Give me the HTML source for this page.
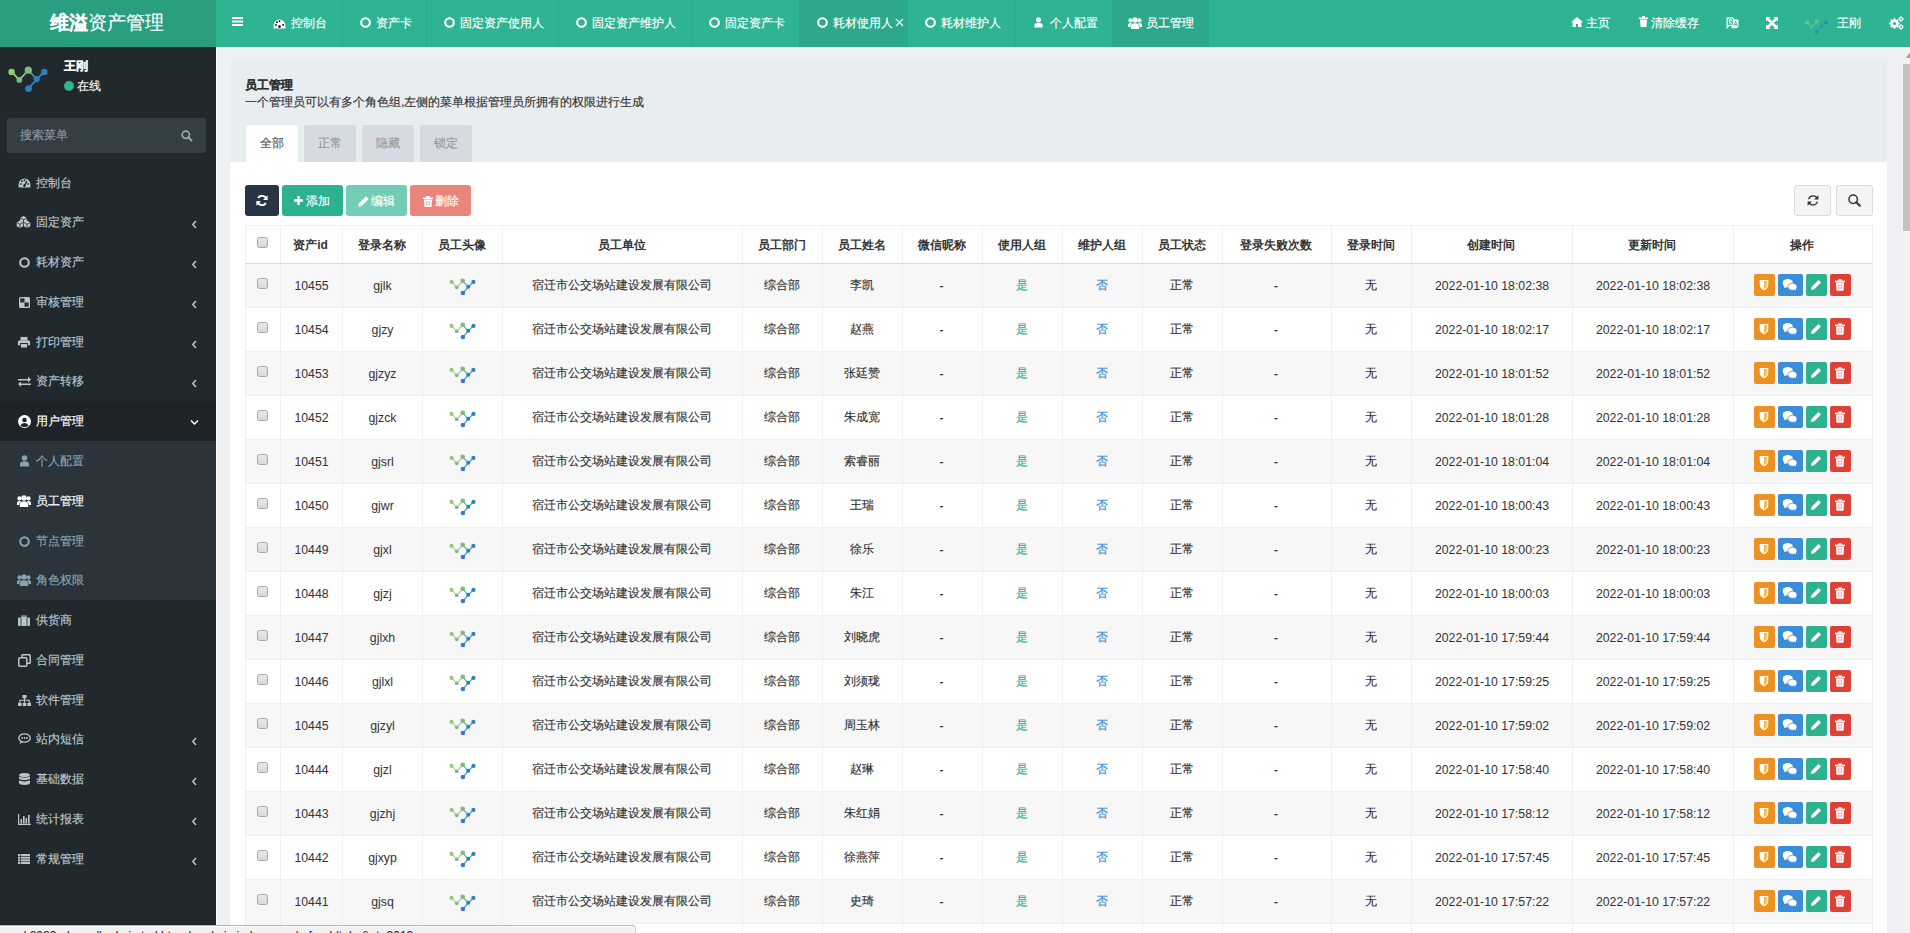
<!DOCTYPE html><html><head><meta charset="utf-8"><style>
*{box-sizing:border-box;margin:0;padding:0}
html,body{width:1910px;height:933px;overflow:hidden;background:#edf1f4;font-family:"Liberation Sans",sans-serif;font-size:12px;color:#333}
body{-webkit-text-stroke:0.15px currentColor}
th,.bold,.n{-webkit-text-stroke:0}
.abs{position:absolute}
#hdr{position:absolute;left:0;top:0;width:1910px;height:47px;background:#2fb493}
#logo{position:absolute;left:-1.5px;top:0;width:216px;height:47px;background:#299e80;color:#fff;font-size:19px;text-align:center;line-height:45px}
#logobg{position:absolute;left:0;top:0;width:216px;height:47px;background:#299e80}
.t{position:absolute;white-space:nowrap;line-height:1}
.sep{position:absolute;top:0;width:1px;height:47px;background:#2caa8a}
#side{position:absolute;left:0;top:47px;width:216px;height:886px;background:#22292d}
.mi{position:absolute;left:0;width:216px;height:40px;color:#b8c7ce;font-size:12px}
.mi .tx{position:absolute;left:36px;top:0;line-height:40px}
.mi .ico{position:absolute;left:17px;top:0;height:40px;display:flex;align-items:center;width:14px;justify-content:center}
.mi .chev{position:absolute;left:191px;top:15px}
#content{position:absolute;left:216px;top:47px;width:1694px;height:886px;background:#edf1f4}
#panel{position:absolute;left:230px;top:61px;width:1657px;height:900px;background:#fff}
#ph{position:absolute;left:0;top:0;width:1657px;height:101px;background:#e8edf0}
.ntab{position:absolute;top:64px;height:37px;background:#d5dbe1;color:#999;border-radius:3px 3px 0 0;text-align:center;line-height:36px;font-size:12px}
.btn{position:absolute;top:124px;height:31px;border-radius:3px;color:#fff;font-size:12px;line-height:31px;text-align:center}
table{position:absolute;left:245px;top:225px;border-collapse:collapse;table-layout:fixed}
td,th{border:1px solid #f0f0f0;text-align:center;white-space:nowrap;overflow:hidden;font-size:12px;font-weight:normal;color:#333;padding:0 2px 0 0}
th{height:38px;font-weight:bold;border-bottom:1px solid #d9d9d9;color:#333;padding-top:1px}
td{height:44px}
tr.odd td{background:#f7f7f7}
.n{font-size:12.3px;position:relative;left:1px}

.cb{display:inline-block;width:11px;height:11px;border:1px solid #a8a8a8;border-radius:2.5px;background:linear-gradient(#e8e8e8,#d8d8d8);vertical-align:middle;position:relative;top:-3px;left:0}
.ab{display:inline-block;height:22px;border-radius:2px;vertical-align:middle;margin-right:3px;position:relative;top:-1px;left:0}
.ab svg{position:absolute;left:50%;top:50%;transform:translate(-50%,-50%)}
</style></head><body>
<div id="hdr">
<div id="logobg"></div><div id="logo" style="background:none"><span style="font-weight:bold">维溢</span>资产管理</div>
<svg class="abs" style="left:232px;top:17px" width="11" height="9" viewBox="0 0 11 9"><rect y="0" width="11" height="2" fill="#fff"/><rect y="3.5" width="11" height="2" fill="#fff"/><rect y="7" width="11" height="2" fill="#fff"/></svg>
<div class="abs" style="left:799px;top:0;width:109px;height:47px;background:#2ca98a"></div>
<div class="abs" style="left:1112px;top:0;width:97px;height:47px;background:#2ca98a"></div>
<div class="sep" style="left:342px"></div>
<div class="sep" style="left:426px"></div>
<div class="sep" style="left:558px"></div>
<div class="sep" style="left:691px"></div>
<div class="sep" style="left:1015px"></div>
<div class="abs" style="left:273px;top:18px"><svg width="13" height="10" viewBox="0 0 14 11"><path d="M7 0.5A6.5 6.5 0 0 0 0.5 7v2.5a1 1 0 0 0 1 1h11a1 1 0 0 0 1-1V7A6.5 6.5 0 0 0 7 0.5z" fill="#fff"/><circle cx="3" cy="6.5" r="1" fill="{bg}"/><circle cx="4.2" cy="3.5" r="1" fill="{bg}"/><circle cx="7" cy="2.5" r="1" fill="{bg}"/><circle cx="11" cy="6.5" r="1" fill="{bg}"/><path d="M7 8.5L9.5 3.5" stroke="{bg}" stroke-width="1.6"/><circle cx="7" cy="8.3" r="1.5" fill="{bg}"/></svg></div>
<div class="t" style="left:291px;top:17px;color:#fff;font-size:12px">控制台</div>
<div class="abs" style="left:360px;top:17px"><svg width="11" height="11" viewBox="0 0 10 10"><circle cx="5" cy="5" r="3.9" fill="none" stroke="#fff" stroke-width="1.9"/></svg></div>
<div class="t" style="left:376px;top:17px;color:#fff;font-size:12px">资产卡</div>
<div class="abs" style="left:444px;top:17px"><svg width="11" height="11" viewBox="0 0 10 10"><circle cx="5" cy="5" r="3.9" fill="none" stroke="#fff" stroke-width="1.9"/></svg></div>
<div class="t" style="left:460px;top:17px;color:#fff;font-size:12px">固定资产使用人</div>
<div class="abs" style="left:576px;top:17px"><svg width="11" height="11" viewBox="0 0 10 10"><circle cx="5" cy="5" r="3.9" fill="none" stroke="#fff" stroke-width="1.9"/></svg></div>
<div class="t" style="left:592px;top:17px;color:#fff;font-size:12px">固定资产维护人</div>
<div class="abs" style="left:709px;top:17px"><svg width="11" height="11" viewBox="0 0 10 10"><circle cx="5" cy="5" r="3.9" fill="none" stroke="#fff" stroke-width="1.9"/></svg></div>
<div class="t" style="left:725px;top:17px;color:#fff;font-size:12px">固定资产卡</div>
<div class="abs" style="left:817px;top:17px"><svg width="11" height="11" viewBox="0 0 10 10"><circle cx="5" cy="5" r="3.9" fill="none" stroke="#fff" stroke-width="1.9"/></svg></div>
<div class="t" style="left:833px;top:17px;color:#fff;font-size:12px">耗材使用人</div>
<div class="abs" style="left:925px;top:17px"><svg width="11" height="11" viewBox="0 0 10 10"><circle cx="5" cy="5" r="3.9" fill="none" stroke="#fff" stroke-width="1.9"/></svg></div>
<div class="t" style="left:941px;top:17px;color:#fff;font-size:12px">耗材维护人</div>
<svg class="abs" style="left:895px;top:18px" width="9" height="9" viewBox="0 0 9 9"><path d="M1 1L8 8M8 1L1 8" stroke="#fff" stroke-width="1.1"/></svg>
<div class="abs" style="left:1034px;top:17px"><svg width="9" height="11" viewBox="0 0 9 12"><circle cx="4.5" cy="3" r="2.8" fill="#fff"/><path d="M0 11.5V9.5C0 7.3 1.5 6.3 4.5 6.3S9 7.3 9 9.5V11.5z" fill="#fff"/></svg></div>
<div class="t" style="left:1050px;top:17px;color:#fff;font-size:12px">个人配置</div>
<div class="abs" style="left:1127.5px;top:17px"><svg width="14" height="12" viewBox="0 0 14 12"><g fill="#fff"><circle cx="7" cy="3" r="2.7"/><circle cx="2.5" cy="3.4" r="2.1"/><circle cx="11.5" cy="3.4" r="2.1"/><path d="M2.8 12V9.3C2.8 7.2 4.5 6.2 7 6.2s4.2 1 4.2 3.1V12z"/><path d="M0 10V8.2C0 6.6 1 5.9 2.5 5.9c.8 0 1.3.2 1.7.5C3 7.1 2.3 8 2.3 10z"/><path d="M14 10V8.2c0-1.6-1-2.3-2.5-2.3-.8 0-1.3.2-1.7.5 1.2.7 1.9 1.6 1.9 3.6z"/></g></svg></div>
<div class="t" style="left:1146px;top:17px;color:#fff;font-size:12px">员工管理</div>
<svg class="abs" style="left:1571px;top:17px" width="12" height="10" viewBox="0 0 12 10"><path d="M6 0L0 5.2h1.6V10h3.3V7h2.2v3h3.3V5.2H12z" fill="#fff"/></svg>
<div class="t" style="left:1586px;top:17px;color:#fff;font-size:12px">主页</div>
<svg class="abs" style="left:1639px;top:16px" width="9" height="11" viewBox="0 0 9 11"><rect x="0" y="1.5" width="9" height="1.5" fill="#fff"/><rect x="3" y="0" width="3" height="2" fill="#fff"/><path d="M1 3.5h7l-.6 7.5H1.6z" fill="#fff"/></svg>
<div class="t" style="left:1651px;top:17px;color:#fff;font-size:12px">清除缓存</div>
<svg class="abs" style="left:1726px;top:17px" width="13" height="12" viewBox="0 0 13 12"><path d="M1.2 .8h5.3l1 1v6.6H3l-1.8 2.2z" fill="none" stroke="#fff" stroke-width="1.3"/><path d="M2.6 3h3.4M4.3 2.2v1M3 3.2c.4 2 1.5 3 3 3.3M5.6 3.2c-.4 2-1.4 3-2.9 3.3" stroke="#fff" stroke-width=".9" fill="none"/><path d="M7 2.5h4.8l.7.7v6.3l-1.8 1.8H5.5V8.5h2z" fill="#fff"/><path d="M8 9l1.6-4.8L11.2 9M8.5 7.6h2.2" stroke="#2fb493" stroke-width=".9" fill="none"/></svg>
<svg class="abs" style="left:1765.5px;top:17px" width="12" height="12" viewBox="0 0 12 12"><g fill="#fff"><path d="M0 0h4.6L0 4.6z"/><path d="M12 0v4.6L7.4 0z"/><path d="M0 12V7.4L4.6 12z"/><path d="M12 12H7.4L12 7.4z"/></g><path d="M2 2l8 8M10 2l-8 8" stroke="#fff" stroke-width="2.6"/></svg>
<div class="abs" style="left:1804.5px;top:18.5px"><svg width="23" height="15.5" viewBox="0 0 40 27" style="opacity:0.75;display:block"><g stroke-width="1.6" fill="none"><line x1="3.6" y1="5.9" x2="11.3" y2="13.9" stroke="#a6d286"/><line x1="11.3" y1="13.9" x2="20.3" y2="4.2" stroke="#9cc98a"/><line x1="20.3" y1="4.2" x2="28.7" y2="13.2" stroke="#5a9fb0"/><line x1="28.7" y1="13.2" x2="36.4" y2="5.9" stroke="#3a8cc4"/><line x1="28.7" y1="13.2" x2="20.6" y2="22.6" stroke="#3a8cc4"/></g><circle cx="3.6" cy="5.9" r="3.2" fill="#93cc6e"/><circle cx="11.3" cy="13.9" r="2.8" fill="#7fb98a"/><circle cx="20.3" cy="4.2" r="3.6" fill="#80bb80"/><circle cx="28.7" cy="13.2" r="3.1" fill="#2d7fbf"/><circle cx="36.4" cy="5.9" r="3.2" fill="#2d7fbf"/><circle cx="20.6" cy="22.6" r="3.4" fill="#2d7fbf"/></svg></div>
<div class="t" style="left:1837px;top:17px;color:#fff;font-size:12px">王刚</div>
<svg class="abs" style="left:1889px;top:16px" width="15" height="14" viewBox="0 0 15 14"><g fill="#fff"><circle cx="5.5" cy="7.5" r="4"/><g stroke="#fff" stroke-width="1.8"><path d="M5.5 2.3v10.4M0.3 7.5h10.4M1.8 3.8l7.4 7.4M9.2 3.8l-7.4 7.4"/></g><circle cx="12" cy="3" r="2.2"/><circle cx="12" cy="11" r="2.2"/><path d="M12 .2v5.6M9.2 3h5.6M12 8.2v5.6M9.2 11h5.6" stroke="#fff" stroke-width="1.1"/></g><circle cx="5.5" cy="7.5" r="1.6" fill="#2fb493"/><circle cx="12" cy="3" r=".9" fill="#2fb493"/><circle cx="12" cy="11" r=".9" fill="#2fb493"/></svg>
</div>
<div id="side">
<div class="abs" style="left:8px;top:19px"><svg width="40" height="27" viewBox="0 0 40 27" style="opacity:1;display:block"><g stroke-width="1.6" fill="none"><line x1="3.6" y1="5.9" x2="11.3" y2="13.9" stroke="#a6d286"/><line x1="11.3" y1="13.9" x2="20.3" y2="4.2" stroke="#9cc98a"/><line x1="20.3" y1="4.2" x2="28.7" y2="13.2" stroke="#5a9fb0"/><line x1="28.7" y1="13.2" x2="36.4" y2="5.9" stroke="#3a8cc4"/><line x1="28.7" y1="13.2" x2="20.6" y2="22.6" stroke="#3a8cc4"/></g><circle cx="3.6" cy="5.9" r="3.2" fill="#93cc6e"/><circle cx="11.3" cy="13.9" r="2.8" fill="#7fb98a"/><circle cx="20.3" cy="4.2" r="3.6" fill="#80bb80"/><circle cx="28.7" cy="13.2" r="3.1" fill="#2d7fbf"/><circle cx="36.4" cy="5.9" r="3.2" fill="#2d7fbf"/><circle cx="20.6" cy="22.6" r="3.4" fill="#2d7fbf"/></svg></div>
<div class="t" style="left:64px;top:13px;color:#fff;font-weight:bold;font-size:12px">王刚</div>
<div class="abs" style="left:64px;top:34px;width:10px;height:10px;border-radius:5px;background:#2fb493"></div>
<div class="t" style="left:77px;top:33px;color:#fff;font-size:12px">在线</div>
<div class="abs" style="left:7px;top:71px;width:199px;height:35px;background:#333f45;border-radius:3px"></div>
<div class="t" style="left:20px;top:82px;color:#8c979c;font-size:12px">搜索菜单</div>
<svg class="abs" style="left:181px;top:83px" width="12" height="12" viewBox="0 0 12 12"><circle cx="4.8" cy="4.8" r="3.6" fill="none" stroke="#a0a9ad" stroke-width="1.7"/><path d="M7.5 7.5L11 11" stroke="#a0a9ad" stroke-width="2"/></svg>
<div class="abs" style="left:0;top:354px;width:216px;height:40px;background:#1e2327"></div>
<div class="abs" style="left:0;top:394px;width:216px;height:159px;background:#2b343a"></div>
<div class="mi" style="top:116px;color:#b8c7ce"><div class="ico"><svg width="13" height="10" viewBox="0 0 14 11"><path d="M7 0.5A6.5 6.5 0 0 0 0.5 7v2.5a1 1 0 0 0 1 1h11a1 1 0 0 0 1-1V7A6.5 6.5 0 0 0 7 0.5z" fill="#b8c7ce"/><circle cx="3" cy="6.5" r="1" fill="#22292d"/><circle cx="4.2" cy="3.5" r="1" fill="#22292d"/><circle cx="7" cy="2.5" r="1" fill="#22292d"/><circle cx="11" cy="6.5" r="1" fill="#22292d"/><path d="M7 8.5L9.5 3.5" stroke="#22292d" stroke-width="1.6"/><circle cx="7" cy="8.3" r="1.5" fill="#22292d"/></svg></div><div class="tx">控制台</div>
</div>
<div class="mi" style="top:155px;color:#b8c7ce"><div class="ico"><svg width="15" height="12" viewBox="0 0 15 12" style="margin-left:-2px"><path d="M7.50 0.00 L10.70 1.85 L10.70 5.55 L7.50 7.40 L4.30 5.55 L4.30 1.85z M3.90 4.60 L7.10 6.45 L7.10 10.15 L3.90 12.00 L0.70 10.15 L0.70 6.45z M11.10 4.60 L14.30 6.45 L14.30 10.15 L11.10 12.00 L7.90 10.15 L7.90 6.45z" fill="#b8c7ce"/><path d="M4.30 1.85 L7.50 3.70 L10.70 1.85 M7.50 3.70 L7.50 7.40 M0.70 6.45 L3.90 8.30 L7.10 6.45 M3.90 8.30 L3.90 12.00 M7.90 6.45 L11.10 8.30 L14.30 6.45 M11.10 8.30 L11.10 12.00" stroke="#22292d" stroke-width=".8" fill="none"/></svg></div><div class="tx">固定资产</div>
<svg class="chev" width="7" height="9" viewBox="0 0 7 9" style="top:18px;left:191px"><path d="M5 1L1.8 4.5 5 8" fill="none" stroke="#b8c7ce" stroke-width="1.5"/></svg>
</div>
<div class="mi" style="top:195px;color:#b8c7ce"><div class="ico"><svg width="11" height="11" viewBox="0 0 10 10"><circle cx="5" cy="5" r="3.9" fill="none" stroke="#b8c7ce" stroke-width="1.9"/></svg></div><div class="tx">耗材资产</div>
<svg class="chev" width="7" height="9" viewBox="0 0 7 9" style="top:18px;left:191px"><path d="M5 1L1.8 4.5 5 8" fill="none" stroke="#b8c7ce" stroke-width="1.5"/></svg>
</div>
<div class="mi" style="top:235px;color:#b8c7ce"><div class="ico"><svg width="11" height="11" viewBox="0 0 11 11"><rect width="11" height="11" rx="1.5" fill="#b8c7ce"/><rect x="1.3" y="1.3" width="4.2" height="4.2" fill="#222d32"/><rect x="5.5" y="5.5" width="4.2" height="4.2" fill="#222d32"/></svg></div><div class="tx">审核管理</div>
<svg class="chev" width="7" height="9" viewBox="0 0 7 9" style="top:18px;left:191px"><path d="M5 1L1.8 4.5 5 8" fill="none" stroke="#b8c7ce" stroke-width="1.5"/></svg>
</div>
<div class="mi" style="top:275px;color:#b8c7ce"><div class="ico"><svg width="12" height="11" viewBox="0 0 12 11"><rect x="2.5" y="0" width="7" height="3.5" fill="#b8c7ce"/><rect x="0" y="3.5" width="12" height="5" rx="1" fill="#b8c7ce"/><rect x="2.5" y="6.5" width="7" height="4.5" fill="#b8c7ce" stroke="#222d32" stroke-width="1"/></svg></div><div class="tx">打印管理</div>
<svg class="chev" width="7" height="9" viewBox="0 0 7 9" style="top:18px;left:191px"><path d="M5 1L1.8 4.5 5 8" fill="none" stroke="#b8c7ce" stroke-width="1.5"/></svg>
</div>
<div class="mi" style="top:314px;color:#b8c7ce"><div class="ico"><svg width="13" height="11" viewBox="0 0 13 11"><path d="M0 3h10V0.5L13 3.5 10 6.5V4.5H0z" fill="#b8c7ce"/><path d="M13 7.5H3V5.5L0 8l3 3V9h10z" fill="#b8c7ce"/></svg></div><div class="tx">资产转移</div>
<svg class="chev" width="7" height="9" viewBox="0 0 7 9" style="top:18px;left:191px"><path d="M5 1L1.8 4.5 5 8" fill="none" stroke="#b8c7ce" stroke-width="1.5"/></svg>
</div>
<div class="mi" style="top:354px;color:#fff"><div class="ico"><svg width="13" height="13" viewBox="0 0 13 13"><circle cx="6.5" cy="6.5" r="6.5" fill="#fff"/><circle cx="6.5" cy="5" r="2.3" fill="#1e282c"/><path d="M2.5 10.5c1-2 2.3-2.6 4-2.6s3 .6 4 2.6c-1 1-2.5 1.6-4 1.6s-3-.6-4-1.6z" fill="#1e282c"/></svg></div><div class="tx">用户管理</div>
<svg class="chev" width="9" height="7" viewBox="0 0 9 7" style="top:18px;left:190px"><path d="M1 1.5L4.5 5 8 1.5" fill="none" stroke="#fff" stroke-width="1.4"/></svg>
</div>
<div class="mi" style="top:394px;color:#8aa4af"><div class="ico"><svg width="9" height="12" viewBox="0 0 9 12"><circle cx="4.5" cy="3" r="2.8" fill="#8aa4af"/><path d="M0 11.5V9.5C0 7.3 1.5 6.3 4.5 6.3S9 7.3 9 9.5V11.5z" fill="#8aa4af"/></svg></div><div class="tx">个人配置</div>
</div>
<div class="mi" style="top:434px;color:#fff"><div class="ico"><svg width="14" height="12" viewBox="0 0 14 12"><g fill="#fff"><circle cx="7" cy="3" r="2.7"/><circle cx="2.5" cy="3.4" r="2.1"/><circle cx="11.5" cy="3.4" r="2.1"/><path d="M2.8 12V9.3C2.8 7.2 4.5 6.2 7 6.2s4.2 1 4.2 3.1V12z"/><path d="M0 10V8.2C0 6.6 1 5.9 2.5 5.9c.8 0 1.3.2 1.7.5C3 7.1 2.3 8 2.3 10z"/><path d="M14 10V8.2c0-1.6-1-2.3-2.5-2.3-.8 0-1.3.2-1.7.5 1.2.7 1.9 1.6 1.9 3.6z"/></g></svg></div><div class="tx">员工管理</div>
</div>
<div class="mi" style="top:474px;color:#8aa4af"><div class="ico"><svg width="11" height="11" viewBox="0 0 10 10"><circle cx="5" cy="5" r="3.9" fill="none" stroke="#8aa4af" stroke-width="1.9"/></svg></div><div class="tx">节点管理</div>
</div>
<div class="mi" style="top:513px;color:#8aa4af"><div class="ico"><svg width="14" height="12" viewBox="0 0 14 12"><g fill="#8aa4af"><circle cx="7" cy="3" r="2.7"/><circle cx="2.5" cy="3.4" r="2.1"/><circle cx="11.5" cy="3.4" r="2.1"/><path d="M2.8 12V9.3C2.8 7.2 4.5 6.2 7 6.2s4.2 1 4.2 3.1V12z"/><path d="M0 10V8.2C0 6.6 1 5.9 2.5 5.9c.8 0 1.3.2 1.7.5C3 7.1 2.3 8 2.3 10z"/><path d="M14 10V8.2c0-1.6-1-2.3-2.5-2.3-.8 0-1.3.2-1.7.5 1.2.7 1.9 1.6 1.9 3.6z"/></g></svg></div><div class="tx">角色权限</div>
</div>
<div class="mi" style="top:553px;color:#b8c7ce"><div class="ico"><svg width="12" height="11" viewBox="0 0 12 11"><path d="M4 1h4v1.5H4z" fill="none" stroke="#b8c7ce" stroke-width="1.2"/><rect x="0" y="2.5" width="12" height="8.5" rx="1" fill="#b8c7ce"/><rect x="2.6" y="2.5" width="0.8" height="8.5" fill="#222d32"/><rect x="8.6" y="2.5" width="0.8" height="8.5" fill="#222d32"/></svg></div><div class="tx">供货商</div>
</div>
<div class="mi" style="top:593px;color:#b8c7ce"><div class="ico"><svg width="13" height="13" viewBox="0 0 13 13"><rect x="0.8" y="3.8" width="8" height="8.4" rx="1" fill="none" stroke="#b8c7ce" stroke-width="1.5"/><path d="M4 3.5V1.2A.5.5 0 0 1 4.5 .8h7.2a.5.5 0 0 1 .5.5v7.4a.5.5 0 0 1-.5.5H9" fill="none" stroke="#b8c7ce" stroke-width="1.5"/></svg></div><div class="tx">合同管理</div>
</div>
<div class="mi" style="top:633px;color:#b8c7ce"><div class="ico"><svg width="13" height="11" viewBox="0 0 13 11"><rect x="4.5" y="0" width="4" height="3.2" fill="#b8c7ce"/><rect x="0" y="7.8" width="3.6" height="3.2" fill="#b8c7ce"/><rect x="4.7" y="7.8" width="3.6" height="3.2" fill="#b8c7ce"/><rect x="9.4" y="7.8" width="3.6" height="3.2" fill="#b8c7ce"/><path d="M6.5 3v2.3M1.8 7.8V5.3h9.4v2.5M6.5 5.3v2.5" stroke="#b8c7ce" stroke-width="1.1" fill="none"/></svg></div><div class="tx">软件管理</div>
</div>
<div class="mi" style="top:672px;color:#b8c7ce"><div class="ico"><svg width="13" height="12" viewBox="0 0 13 12"><ellipse cx="6.5" cy="5" rx="5.7" ry="4.2" fill="none" stroke="#b8c7ce" stroke-width="1.3"/><path d="M2.5 8L1.5 11 5 9" fill="#b8c7ce"/><circle cx="4" cy="5" r=".9" fill="#b8c7ce"/><circle cx="6.5" cy="5" r=".9" fill="#b8c7ce"/><circle cx="9" cy="5" r=".9" fill="#b8c7ce"/></svg></div><div class="tx">站内短信</div>
<svg class="chev" width="7" height="9" viewBox="0 0 7 9" style="top:18px;left:191px"><path d="M5 1L1.8 4.5 5 8" fill="none" stroke="#b8c7ce" stroke-width="1.5"/></svg>
</div>
<div class="mi" style="top:712px;color:#b8c7ce"><div class="ico"><svg width="11" height="12" viewBox="0 0 11 12"><ellipse cx="5.5" cy="2" rx="5.5" ry="2" fill="#b8c7ce"/><path d="M0 3.3c1 1 3 1.4 5.5 1.4S10 4.3 11 3.3V5.5c-1 1-3 1.5-5.5 1.5S1 6.5 0 5.5z" fill="#b8c7ce"/><path d="M0 7c1 1 3 1.4 5.5 1.4S10 8 11 7v3c0 1-2.5 2-5.5 2S0 11 0 10z" fill="#b8c7ce"/></svg></div><div class="tx">基础数据</div>
<svg class="chev" width="7" height="9" viewBox="0 0 7 9" style="top:18px;left:191px"><path d="M5 1L1.8 4.5 5 8" fill="none" stroke="#b8c7ce" stroke-width="1.5"/></svg>
</div>
<div class="mi" style="top:752px;color:#b8c7ce"><div class="ico"><svg width="13" height="11" viewBox="0 0 13 11"><path d="M0.6 0v10.4H13" fill="none" stroke="#b8c7ce" stroke-width="1.2"/><rect x="2.5" y="5" width="1.6" height="4.5" fill="#b8c7ce"/><rect x="5" y="2" width="1.6" height="7.5" fill="#b8c7ce"/><rect x="7.5" y="4" width="1.6" height="5.5" fill="#b8c7ce"/><rect x="10" y="1" width="1.6" height="8.5" fill="#b8c7ce"/></svg></div><div class="tx">统计报表</div>
<svg class="chev" width="7" height="9" viewBox="0 0 7 9" style="top:18px;left:191px"><path d="M5 1L1.8 4.5 5 8" fill="none" stroke="#b8c7ce" stroke-width="1.5"/></svg>
</div>
<div class="mi" style="top:792px;color:#b8c7ce"><div class="ico"><svg width="12" height="10" viewBox="0 0 12 10"><rect x="0" y="0" width="2.3" height="2" fill="#b8c7ce"/><rect x="3" y="0" width="9" height="2" fill="#b8c7ce"/><rect x="0" y="2.7" width="2.3" height="2" fill="#b8c7ce"/><rect x="3" y="2.7" width="9" height="2" fill="#b8c7ce"/><rect x="0" y="5.4" width="2.3" height="2" fill="#b8c7ce"/><rect x="3" y="5.4" width="9" height="2" fill="#b8c7ce"/><rect x="0" y="8" width="2.3" height="2" fill="#b8c7ce"/><rect x="3" y="8" width="9" height="2" fill="#b8c7ce"/></svg></div><div class="tx">常规管理</div>
<svg class="chev" width="7" height="9" viewBox="0 0 7 9" style="top:18px;left:191px"><path d="M5 1L1.8 4.5 5 8" fill="none" stroke="#b8c7ce" stroke-width="1.5"/></svg>
</div>
</div>
<div id="content"><div class="abs" style="left:0;top:0;width:1px;height:886px;background:#fff"></div></div>
<div id="panel"><div id="ph">
<div class="t" style="left:15px;top:18px;font-weight:bold;color:#333">员工管理</div>
<div class="t" style="left:15px;top:35px;color:#333">一个管理员可以有多个角色组,左侧的菜单根据管理员所拥有的权限进行生成</div>
<div class="ntab" style="left:16px;width:52px;background:#fff;color:#555">全部</div>
<div class="ntab" style="left:74px;width:52px">正常</div>
<div class="ntab" style="left:132px;width:52px">隐藏</div>
<div class="ntab" style="left:190px;width:52px">锁定</div>
</div>
<div class="btn" style="left:15px;width:34px;background:#263445"><svg style="position:absolute;left:11px;top:10px" width="12" height="11" viewBox="0 0 12 11"><path d="M10.3 4.3A4.4 4.4 0 0 0 2.2 3" fill="none" stroke="#fff" stroke-width="1.9"/><path d="M11.6 0.3v4.6H7z" fill="#fff"/><path d="M1.7 6.7A4.4 4.4 0 0 0 9.8 8" fill="none" stroke="#fff" stroke-width="1.9"/><path d="M0.4 10.7V6.1H5z" fill="#fff"/></svg></div>
<div class="btn" style="left:52px;width:61px;background:#2cb28f"><svg style="position:absolute;left:12px;top:10.5px" width="9" height="9" viewBox="0 0 9 9"><path d="M3.3 0h2.4v3.3H9v2.4H5.7V9H3.3V5.7H0V3.3h3.3z" fill="#fff"/></svg><span style="position:absolute;left:24px;top:1px">添加</span></div>
<div class="btn" style="left:116px;width:61px;background:#72cdb4"><svg style="position:absolute;left:11.5px;top:10.5px" width="11" height="11" viewBox="0 0 11 11"><path d="M8 0.3l2.7 2.7L3.4 10.3 0.3 10.7 0.7 7.6z" fill="#fff"/><path d="M1.5 7.8l1.7 1.7" stroke="#72cdb4" stroke-width=".7"/></svg><span style="position:absolute;left:25px;top:1px">编辑</span></div>
<div class="btn" style="left:180px;width:61px;background:#ea857c"><svg style="position:absolute;left:12.5px;top:10.5px" width="10" height="11" viewBox="0 0 10 11"><rect x="0" y="1.5" width="10" height="1.6" fill="#fff"/><rect x="3" y="0" width="4" height="2" rx=".5" fill="#fff"/><path d="M1 3.6h8l-.5 7.4H1.5z" fill="#fff"/><path d="M3.4 5v4.5M5 5v4.5M6.6 5v4.5" stroke="#ea857c" stroke-width=".6"/></svg><span style="position:absolute;left:24.5px;top:1px">删除</span></div>
<div class="btn" style="left:1564px;width:37px;background:#f3f4f4;border:1px solid #dcdcdc"><svg style="position:absolute;left:12px;top:8px" width="12" height="13" viewBox="0 0 12 13"><path d="M10.2 4.6A4.6 4.6 0 0 0 1.6 5.2" fill="none" stroke="#333" stroke-width="1.3"/><path d="M11.4 1.2v4.4H7z" fill="#333"/><path d="M1.8 8.2A4.6 4.6 0 0 0 10.4 7.6" fill="none" stroke="#333" stroke-width="1.3"/><path d="M0.6 11.8V7.4H5z" fill="#333"/></svg></div>
<div class="btn" style="left:1606px;width:37px;background:#f3f4f4;border:1px solid #dcdcdc"><svg style="position:absolute;left:11px;top:8px" width="13" height="13" viewBox="0 0 13 13"><circle cx="5.2" cy="5.2" r="4.2" fill="none" stroke="#333" stroke-width="1.5"/><path d="M8.3 8.3L11.8 11.8" stroke="#333" stroke-width="2" stroke-linecap="round"/></svg></div>
</div>
<table><colgroup><col style="width:35px"><col style="width:62px"><col style="width:80px"><col style="width:80px"><col style="width:240px"><col style="width:80px"><col style="width:80px"><col style="width:80px"><col style="width:80px"><col style="width:80px"><col style="width:80px"><col style="width:109px"><col style="width:80px"><col style="width:161px"><col style="width:161px"><col style="width:139px"></colgroup>
<tr><th><span class=cb></span></th><th>资产id</th><th>登录名称</th><th>员工头像</th><th>员工单位</th><th>员工部门</th><th>员工姓名</th><th>微信昵称</th><th>使用人组</th><th>维护人组</th><th>员工状态</th><th>登录失败次数</th><th>登录时间</th><th>创建时间</th><th>更新时间</th><th>操作</th></tr>
<tr class="odd"><td><span class="cb"></span></td><td><span class=n>10455</span></td><td><span class=n>gjlk</span></td><td><span style="display:inline-block;position:relative;top:3px;left:0.5px"><svg width="27" height="18" viewBox="0 0 40 27" style="opacity:1;display:block"><g stroke-width="1.6" fill="none"><line x1="3.6" y1="5.9" x2="11.3" y2="13.9" stroke="#a6d286"/><line x1="11.3" y1="13.9" x2="20.3" y2="4.2" stroke="#9cc98a"/><line x1="20.3" y1="4.2" x2="28.7" y2="13.2" stroke="#5a9fb0"/><line x1="28.7" y1="13.2" x2="36.4" y2="5.9" stroke="#3a8cc4"/><line x1="28.7" y1="13.2" x2="20.6" y2="22.6" stroke="#3a8cc4"/></g><circle cx="3.6" cy="5.9" r="3.2" fill="#93cc6e"/><circle cx="11.3" cy="13.9" r="2.8" fill="#7fb98a"/><circle cx="20.3" cy="4.2" r="3.6" fill="#80bb80"/><circle cx="28.7" cy="13.2" r="3.1" fill="#2d7fbf"/><circle cx="36.4" cy="5.9" r="3.2" fill="#2d7fbf"/><circle cx="20.6" cy="22.6" r="3.4" fill="#2d7fbf"/></svg></span></td><td>宿迁市公交场站建设发展有限公司</td><td>综合部</td><td>李凯</td><td>-</td><td><span style="color:#2cb28f">是</span></td><td><span style="color:#3a8dd6">否</span></td><td>正常</td><td>-</td><td>无</td><td><span class=n>2022-01-10 18:02:38</span></td><td><span class=n>2022-01-10 18:02:38</span></td><td><span class="ab" style="width:21px;background:#ec9123"><svg width="9" height="11" viewBox="0 0 9 11"><path d="M0 0.5h9v4.5C9 8 6.5 10 4.5 11 2.5 10 0 8 0 5z" fill="#fff"/><path d="M4.5 1.5h3.3v3.5c0 2.3-1.6 3.8-3.3 4.8z" fill="#f5c04a"/></svg></span><span class="ab" style="width:25px;background:#3a8dd6"><svg width="15" height="12" viewBox="0 0 15 12"><ellipse cx="5.3" cy="4.3" rx="5.2" ry="4.2" fill="#fff"/><path d="M1.8 7L1.3 9.3 4 8z" fill="#fff"/><ellipse cx="10" cy="7.8" rx="4.6" ry="3.6" fill="#fff" stroke="#3a8dd6" stroke-width=".8"/><path d="M12.5 10.5l1 1.3-.1-2z" fill="#fff"/></svg></span><span class="ab" style="width:21px;background:#2cb28f"><svg width="11" height="11" viewBox="0 0 11 11"><path d="M8 0.5l2.5 2.5L3.5 10 0.5 10.5 1 7.5z" fill="#fff"/></svg></span><span class="ab" style="width:21px;background:#dd4138;margin-right:0"><svg width="10" height="12" viewBox="0 0 10 12"><rect x="0" y="1.6" width="10" height="1.6" fill="#fff"/><rect x="3.3" y="0.2" width="3.4" height="2" fill="#fff"/><path d="M1 3.6h8l-.5 8.2H1.5z" fill="#fff"/><path d="M3.3 5v5.5M5 5v5.5M6.7 5v5.5" stroke="#e88" stroke-width=".6"/></svg></span></td></tr>
<tr class=""><td><span class="cb"></span></td><td><span class=n>10454</span></td><td><span class=n>gjzy</span></td><td><span style="display:inline-block;position:relative;top:3px;left:0.5px"><svg width="27" height="18" viewBox="0 0 40 27" style="opacity:1;display:block"><g stroke-width="1.6" fill="none"><line x1="3.6" y1="5.9" x2="11.3" y2="13.9" stroke="#a6d286"/><line x1="11.3" y1="13.9" x2="20.3" y2="4.2" stroke="#9cc98a"/><line x1="20.3" y1="4.2" x2="28.7" y2="13.2" stroke="#5a9fb0"/><line x1="28.7" y1="13.2" x2="36.4" y2="5.9" stroke="#3a8cc4"/><line x1="28.7" y1="13.2" x2="20.6" y2="22.6" stroke="#3a8cc4"/></g><circle cx="3.6" cy="5.9" r="3.2" fill="#93cc6e"/><circle cx="11.3" cy="13.9" r="2.8" fill="#7fb98a"/><circle cx="20.3" cy="4.2" r="3.6" fill="#80bb80"/><circle cx="28.7" cy="13.2" r="3.1" fill="#2d7fbf"/><circle cx="36.4" cy="5.9" r="3.2" fill="#2d7fbf"/><circle cx="20.6" cy="22.6" r="3.4" fill="#2d7fbf"/></svg></span></td><td>宿迁市公交场站建设发展有限公司</td><td>综合部</td><td>赵燕</td><td>-</td><td><span style="color:#2cb28f">是</span></td><td><span style="color:#3a8dd6">否</span></td><td>正常</td><td>-</td><td>无</td><td><span class=n>2022-01-10 18:02:17</span></td><td><span class=n>2022-01-10 18:02:17</span></td><td><span class="ab" style="width:21px;background:#ec9123"><svg width="9" height="11" viewBox="0 0 9 11"><path d="M0 0.5h9v4.5C9 8 6.5 10 4.5 11 2.5 10 0 8 0 5z" fill="#fff"/><path d="M4.5 1.5h3.3v3.5c0 2.3-1.6 3.8-3.3 4.8z" fill="#f5c04a"/></svg></span><span class="ab" style="width:25px;background:#3a8dd6"><svg width="15" height="12" viewBox="0 0 15 12"><ellipse cx="5.3" cy="4.3" rx="5.2" ry="4.2" fill="#fff"/><path d="M1.8 7L1.3 9.3 4 8z" fill="#fff"/><ellipse cx="10" cy="7.8" rx="4.6" ry="3.6" fill="#fff" stroke="#3a8dd6" stroke-width=".8"/><path d="M12.5 10.5l1 1.3-.1-2z" fill="#fff"/></svg></span><span class="ab" style="width:21px;background:#2cb28f"><svg width="11" height="11" viewBox="0 0 11 11"><path d="M8 0.5l2.5 2.5L3.5 10 0.5 10.5 1 7.5z" fill="#fff"/></svg></span><span class="ab" style="width:21px;background:#dd4138;margin-right:0"><svg width="10" height="12" viewBox="0 0 10 12"><rect x="0" y="1.6" width="10" height="1.6" fill="#fff"/><rect x="3.3" y="0.2" width="3.4" height="2" fill="#fff"/><path d="M1 3.6h8l-.5 8.2H1.5z" fill="#fff"/><path d="M3.3 5v5.5M5 5v5.5M6.7 5v5.5" stroke="#e88" stroke-width=".6"/></svg></span></td></tr>
<tr class="odd"><td><span class="cb"></span></td><td><span class=n>10453</span></td><td><span class=n>gjzyz</span></td><td><span style="display:inline-block;position:relative;top:3px;left:0.5px"><svg width="27" height="18" viewBox="0 0 40 27" style="opacity:1;display:block"><g stroke-width="1.6" fill="none"><line x1="3.6" y1="5.9" x2="11.3" y2="13.9" stroke="#a6d286"/><line x1="11.3" y1="13.9" x2="20.3" y2="4.2" stroke="#9cc98a"/><line x1="20.3" y1="4.2" x2="28.7" y2="13.2" stroke="#5a9fb0"/><line x1="28.7" y1="13.2" x2="36.4" y2="5.9" stroke="#3a8cc4"/><line x1="28.7" y1="13.2" x2="20.6" y2="22.6" stroke="#3a8cc4"/></g><circle cx="3.6" cy="5.9" r="3.2" fill="#93cc6e"/><circle cx="11.3" cy="13.9" r="2.8" fill="#7fb98a"/><circle cx="20.3" cy="4.2" r="3.6" fill="#80bb80"/><circle cx="28.7" cy="13.2" r="3.1" fill="#2d7fbf"/><circle cx="36.4" cy="5.9" r="3.2" fill="#2d7fbf"/><circle cx="20.6" cy="22.6" r="3.4" fill="#2d7fbf"/></svg></span></td><td>宿迁市公交场站建设发展有限公司</td><td>综合部</td><td>张廷赞</td><td>-</td><td><span style="color:#2cb28f">是</span></td><td><span style="color:#3a8dd6">否</span></td><td>正常</td><td>-</td><td>无</td><td><span class=n>2022-01-10 18:01:52</span></td><td><span class=n>2022-01-10 18:01:52</span></td><td><span class="ab" style="width:21px;background:#ec9123"><svg width="9" height="11" viewBox="0 0 9 11"><path d="M0 0.5h9v4.5C9 8 6.5 10 4.5 11 2.5 10 0 8 0 5z" fill="#fff"/><path d="M4.5 1.5h3.3v3.5c0 2.3-1.6 3.8-3.3 4.8z" fill="#f5c04a"/></svg></span><span class="ab" style="width:25px;background:#3a8dd6"><svg width="15" height="12" viewBox="0 0 15 12"><ellipse cx="5.3" cy="4.3" rx="5.2" ry="4.2" fill="#fff"/><path d="M1.8 7L1.3 9.3 4 8z" fill="#fff"/><ellipse cx="10" cy="7.8" rx="4.6" ry="3.6" fill="#fff" stroke="#3a8dd6" stroke-width=".8"/><path d="M12.5 10.5l1 1.3-.1-2z" fill="#fff"/></svg></span><span class="ab" style="width:21px;background:#2cb28f"><svg width="11" height="11" viewBox="0 0 11 11"><path d="M8 0.5l2.5 2.5L3.5 10 0.5 10.5 1 7.5z" fill="#fff"/></svg></span><span class="ab" style="width:21px;background:#dd4138;margin-right:0"><svg width="10" height="12" viewBox="0 0 10 12"><rect x="0" y="1.6" width="10" height="1.6" fill="#fff"/><rect x="3.3" y="0.2" width="3.4" height="2" fill="#fff"/><path d="M1 3.6h8l-.5 8.2H1.5z" fill="#fff"/><path d="M3.3 5v5.5M5 5v5.5M6.7 5v5.5" stroke="#e88" stroke-width=".6"/></svg></span></td></tr>
<tr class=""><td><span class="cb"></span></td><td><span class=n>10452</span></td><td><span class=n>gjzck</span></td><td><span style="display:inline-block;position:relative;top:3px;left:0.5px"><svg width="27" height="18" viewBox="0 0 40 27" style="opacity:1;display:block"><g stroke-width="1.6" fill="none"><line x1="3.6" y1="5.9" x2="11.3" y2="13.9" stroke="#a6d286"/><line x1="11.3" y1="13.9" x2="20.3" y2="4.2" stroke="#9cc98a"/><line x1="20.3" y1="4.2" x2="28.7" y2="13.2" stroke="#5a9fb0"/><line x1="28.7" y1="13.2" x2="36.4" y2="5.9" stroke="#3a8cc4"/><line x1="28.7" y1="13.2" x2="20.6" y2="22.6" stroke="#3a8cc4"/></g><circle cx="3.6" cy="5.9" r="3.2" fill="#93cc6e"/><circle cx="11.3" cy="13.9" r="2.8" fill="#7fb98a"/><circle cx="20.3" cy="4.2" r="3.6" fill="#80bb80"/><circle cx="28.7" cy="13.2" r="3.1" fill="#2d7fbf"/><circle cx="36.4" cy="5.9" r="3.2" fill="#2d7fbf"/><circle cx="20.6" cy="22.6" r="3.4" fill="#2d7fbf"/></svg></span></td><td>宿迁市公交场站建设发展有限公司</td><td>综合部</td><td>朱成宽</td><td>-</td><td><span style="color:#2cb28f">是</span></td><td><span style="color:#3a8dd6">否</span></td><td>正常</td><td>-</td><td>无</td><td><span class=n>2022-01-10 18:01:28</span></td><td><span class=n>2022-01-10 18:01:28</span></td><td><span class="ab" style="width:21px;background:#ec9123"><svg width="9" height="11" viewBox="0 0 9 11"><path d="M0 0.5h9v4.5C9 8 6.5 10 4.5 11 2.5 10 0 8 0 5z" fill="#fff"/><path d="M4.5 1.5h3.3v3.5c0 2.3-1.6 3.8-3.3 4.8z" fill="#f5c04a"/></svg></span><span class="ab" style="width:25px;background:#3a8dd6"><svg width="15" height="12" viewBox="0 0 15 12"><ellipse cx="5.3" cy="4.3" rx="5.2" ry="4.2" fill="#fff"/><path d="M1.8 7L1.3 9.3 4 8z" fill="#fff"/><ellipse cx="10" cy="7.8" rx="4.6" ry="3.6" fill="#fff" stroke="#3a8dd6" stroke-width=".8"/><path d="M12.5 10.5l1 1.3-.1-2z" fill="#fff"/></svg></span><span class="ab" style="width:21px;background:#2cb28f"><svg width="11" height="11" viewBox="0 0 11 11"><path d="M8 0.5l2.5 2.5L3.5 10 0.5 10.5 1 7.5z" fill="#fff"/></svg></span><span class="ab" style="width:21px;background:#dd4138;margin-right:0"><svg width="10" height="12" viewBox="0 0 10 12"><rect x="0" y="1.6" width="10" height="1.6" fill="#fff"/><rect x="3.3" y="0.2" width="3.4" height="2" fill="#fff"/><path d="M1 3.6h8l-.5 8.2H1.5z" fill="#fff"/><path d="M3.3 5v5.5M5 5v5.5M6.7 5v5.5" stroke="#e88" stroke-width=".6"/></svg></span></td></tr>
<tr class="odd"><td><span class="cb"></span></td><td><span class=n>10451</span></td><td><span class=n>gjsrl</span></td><td><span style="display:inline-block;position:relative;top:3px;left:0.5px"><svg width="27" height="18" viewBox="0 0 40 27" style="opacity:1;display:block"><g stroke-width="1.6" fill="none"><line x1="3.6" y1="5.9" x2="11.3" y2="13.9" stroke="#a6d286"/><line x1="11.3" y1="13.9" x2="20.3" y2="4.2" stroke="#9cc98a"/><line x1="20.3" y1="4.2" x2="28.7" y2="13.2" stroke="#5a9fb0"/><line x1="28.7" y1="13.2" x2="36.4" y2="5.9" stroke="#3a8cc4"/><line x1="28.7" y1="13.2" x2="20.6" y2="22.6" stroke="#3a8cc4"/></g><circle cx="3.6" cy="5.9" r="3.2" fill="#93cc6e"/><circle cx="11.3" cy="13.9" r="2.8" fill="#7fb98a"/><circle cx="20.3" cy="4.2" r="3.6" fill="#80bb80"/><circle cx="28.7" cy="13.2" r="3.1" fill="#2d7fbf"/><circle cx="36.4" cy="5.9" r="3.2" fill="#2d7fbf"/><circle cx="20.6" cy="22.6" r="3.4" fill="#2d7fbf"/></svg></span></td><td>宿迁市公交场站建设发展有限公司</td><td>综合部</td><td>索睿丽</td><td>-</td><td><span style="color:#2cb28f">是</span></td><td><span style="color:#3a8dd6">否</span></td><td>正常</td><td>-</td><td>无</td><td><span class=n>2022-01-10 18:01:04</span></td><td><span class=n>2022-01-10 18:01:04</span></td><td><span class="ab" style="width:21px;background:#ec9123"><svg width="9" height="11" viewBox="0 0 9 11"><path d="M0 0.5h9v4.5C9 8 6.5 10 4.5 11 2.5 10 0 8 0 5z" fill="#fff"/><path d="M4.5 1.5h3.3v3.5c0 2.3-1.6 3.8-3.3 4.8z" fill="#f5c04a"/></svg></span><span class="ab" style="width:25px;background:#3a8dd6"><svg width="15" height="12" viewBox="0 0 15 12"><ellipse cx="5.3" cy="4.3" rx="5.2" ry="4.2" fill="#fff"/><path d="M1.8 7L1.3 9.3 4 8z" fill="#fff"/><ellipse cx="10" cy="7.8" rx="4.6" ry="3.6" fill="#fff" stroke="#3a8dd6" stroke-width=".8"/><path d="M12.5 10.5l1 1.3-.1-2z" fill="#fff"/></svg></span><span class="ab" style="width:21px;background:#2cb28f"><svg width="11" height="11" viewBox="0 0 11 11"><path d="M8 0.5l2.5 2.5L3.5 10 0.5 10.5 1 7.5z" fill="#fff"/></svg></span><span class="ab" style="width:21px;background:#dd4138;margin-right:0"><svg width="10" height="12" viewBox="0 0 10 12"><rect x="0" y="1.6" width="10" height="1.6" fill="#fff"/><rect x="3.3" y="0.2" width="3.4" height="2" fill="#fff"/><path d="M1 3.6h8l-.5 8.2H1.5z" fill="#fff"/><path d="M3.3 5v5.5M5 5v5.5M6.7 5v5.5" stroke="#e88" stroke-width=".6"/></svg></span></td></tr>
<tr class=""><td><span class="cb"></span></td><td><span class=n>10450</span></td><td><span class=n>gjwr</span></td><td><span style="display:inline-block;position:relative;top:3px;left:0.5px"><svg width="27" height="18" viewBox="0 0 40 27" style="opacity:1;display:block"><g stroke-width="1.6" fill="none"><line x1="3.6" y1="5.9" x2="11.3" y2="13.9" stroke="#a6d286"/><line x1="11.3" y1="13.9" x2="20.3" y2="4.2" stroke="#9cc98a"/><line x1="20.3" y1="4.2" x2="28.7" y2="13.2" stroke="#5a9fb0"/><line x1="28.7" y1="13.2" x2="36.4" y2="5.9" stroke="#3a8cc4"/><line x1="28.7" y1="13.2" x2="20.6" y2="22.6" stroke="#3a8cc4"/></g><circle cx="3.6" cy="5.9" r="3.2" fill="#93cc6e"/><circle cx="11.3" cy="13.9" r="2.8" fill="#7fb98a"/><circle cx="20.3" cy="4.2" r="3.6" fill="#80bb80"/><circle cx="28.7" cy="13.2" r="3.1" fill="#2d7fbf"/><circle cx="36.4" cy="5.9" r="3.2" fill="#2d7fbf"/><circle cx="20.6" cy="22.6" r="3.4" fill="#2d7fbf"/></svg></span></td><td>宿迁市公交场站建设发展有限公司</td><td>综合部</td><td>王瑞</td><td>-</td><td><span style="color:#2cb28f">是</span></td><td><span style="color:#3a8dd6">否</span></td><td>正常</td><td>-</td><td>无</td><td><span class=n>2022-01-10 18:00:43</span></td><td><span class=n>2022-01-10 18:00:43</span></td><td><span class="ab" style="width:21px;background:#ec9123"><svg width="9" height="11" viewBox="0 0 9 11"><path d="M0 0.5h9v4.5C9 8 6.5 10 4.5 11 2.5 10 0 8 0 5z" fill="#fff"/><path d="M4.5 1.5h3.3v3.5c0 2.3-1.6 3.8-3.3 4.8z" fill="#f5c04a"/></svg></span><span class="ab" style="width:25px;background:#3a8dd6"><svg width="15" height="12" viewBox="0 0 15 12"><ellipse cx="5.3" cy="4.3" rx="5.2" ry="4.2" fill="#fff"/><path d="M1.8 7L1.3 9.3 4 8z" fill="#fff"/><ellipse cx="10" cy="7.8" rx="4.6" ry="3.6" fill="#fff" stroke="#3a8dd6" stroke-width=".8"/><path d="M12.5 10.5l1 1.3-.1-2z" fill="#fff"/></svg></span><span class="ab" style="width:21px;background:#2cb28f"><svg width="11" height="11" viewBox="0 0 11 11"><path d="M8 0.5l2.5 2.5L3.5 10 0.5 10.5 1 7.5z" fill="#fff"/></svg></span><span class="ab" style="width:21px;background:#dd4138;margin-right:0"><svg width="10" height="12" viewBox="0 0 10 12"><rect x="0" y="1.6" width="10" height="1.6" fill="#fff"/><rect x="3.3" y="0.2" width="3.4" height="2" fill="#fff"/><path d="M1 3.6h8l-.5 8.2H1.5z" fill="#fff"/><path d="M3.3 5v5.5M5 5v5.5M6.7 5v5.5" stroke="#e88" stroke-width=".6"/></svg></span></td></tr>
<tr class="odd"><td><span class="cb"></span></td><td><span class=n>10449</span></td><td><span class=n>gjxl</span></td><td><span style="display:inline-block;position:relative;top:3px;left:0.5px"><svg width="27" height="18" viewBox="0 0 40 27" style="opacity:1;display:block"><g stroke-width="1.6" fill="none"><line x1="3.6" y1="5.9" x2="11.3" y2="13.9" stroke="#a6d286"/><line x1="11.3" y1="13.9" x2="20.3" y2="4.2" stroke="#9cc98a"/><line x1="20.3" y1="4.2" x2="28.7" y2="13.2" stroke="#5a9fb0"/><line x1="28.7" y1="13.2" x2="36.4" y2="5.9" stroke="#3a8cc4"/><line x1="28.7" y1="13.2" x2="20.6" y2="22.6" stroke="#3a8cc4"/></g><circle cx="3.6" cy="5.9" r="3.2" fill="#93cc6e"/><circle cx="11.3" cy="13.9" r="2.8" fill="#7fb98a"/><circle cx="20.3" cy="4.2" r="3.6" fill="#80bb80"/><circle cx="28.7" cy="13.2" r="3.1" fill="#2d7fbf"/><circle cx="36.4" cy="5.9" r="3.2" fill="#2d7fbf"/><circle cx="20.6" cy="22.6" r="3.4" fill="#2d7fbf"/></svg></span></td><td>宿迁市公交场站建设发展有限公司</td><td>综合部</td><td>徐乐</td><td>-</td><td><span style="color:#2cb28f">是</span></td><td><span style="color:#3a8dd6">否</span></td><td>正常</td><td>-</td><td>无</td><td><span class=n>2022-01-10 18:00:23</span></td><td><span class=n>2022-01-10 18:00:23</span></td><td><span class="ab" style="width:21px;background:#ec9123"><svg width="9" height="11" viewBox="0 0 9 11"><path d="M0 0.5h9v4.5C9 8 6.5 10 4.5 11 2.5 10 0 8 0 5z" fill="#fff"/><path d="M4.5 1.5h3.3v3.5c0 2.3-1.6 3.8-3.3 4.8z" fill="#f5c04a"/></svg></span><span class="ab" style="width:25px;background:#3a8dd6"><svg width="15" height="12" viewBox="0 0 15 12"><ellipse cx="5.3" cy="4.3" rx="5.2" ry="4.2" fill="#fff"/><path d="M1.8 7L1.3 9.3 4 8z" fill="#fff"/><ellipse cx="10" cy="7.8" rx="4.6" ry="3.6" fill="#fff" stroke="#3a8dd6" stroke-width=".8"/><path d="M12.5 10.5l1 1.3-.1-2z" fill="#fff"/></svg></span><span class="ab" style="width:21px;background:#2cb28f"><svg width="11" height="11" viewBox="0 0 11 11"><path d="M8 0.5l2.5 2.5L3.5 10 0.5 10.5 1 7.5z" fill="#fff"/></svg></span><span class="ab" style="width:21px;background:#dd4138;margin-right:0"><svg width="10" height="12" viewBox="0 0 10 12"><rect x="0" y="1.6" width="10" height="1.6" fill="#fff"/><rect x="3.3" y="0.2" width="3.4" height="2" fill="#fff"/><path d="M1 3.6h8l-.5 8.2H1.5z" fill="#fff"/><path d="M3.3 5v5.5M5 5v5.5M6.7 5v5.5" stroke="#e88" stroke-width=".6"/></svg></span></td></tr>
<tr class=""><td><span class="cb"></span></td><td><span class=n>10448</span></td><td><span class=n>gjzj</span></td><td><span style="display:inline-block;position:relative;top:3px;left:0.5px"><svg width="27" height="18" viewBox="0 0 40 27" style="opacity:1;display:block"><g stroke-width="1.6" fill="none"><line x1="3.6" y1="5.9" x2="11.3" y2="13.9" stroke="#a6d286"/><line x1="11.3" y1="13.9" x2="20.3" y2="4.2" stroke="#9cc98a"/><line x1="20.3" y1="4.2" x2="28.7" y2="13.2" stroke="#5a9fb0"/><line x1="28.7" y1="13.2" x2="36.4" y2="5.9" stroke="#3a8cc4"/><line x1="28.7" y1="13.2" x2="20.6" y2="22.6" stroke="#3a8cc4"/></g><circle cx="3.6" cy="5.9" r="3.2" fill="#93cc6e"/><circle cx="11.3" cy="13.9" r="2.8" fill="#7fb98a"/><circle cx="20.3" cy="4.2" r="3.6" fill="#80bb80"/><circle cx="28.7" cy="13.2" r="3.1" fill="#2d7fbf"/><circle cx="36.4" cy="5.9" r="3.2" fill="#2d7fbf"/><circle cx="20.6" cy="22.6" r="3.4" fill="#2d7fbf"/></svg></span></td><td>宿迁市公交场站建设发展有限公司</td><td>综合部</td><td>朱江</td><td>-</td><td><span style="color:#2cb28f">是</span></td><td><span style="color:#3a8dd6">否</span></td><td>正常</td><td>-</td><td>无</td><td><span class=n>2022-01-10 18:00:03</span></td><td><span class=n>2022-01-10 18:00:03</span></td><td><span class="ab" style="width:21px;background:#ec9123"><svg width="9" height="11" viewBox="0 0 9 11"><path d="M0 0.5h9v4.5C9 8 6.5 10 4.5 11 2.5 10 0 8 0 5z" fill="#fff"/><path d="M4.5 1.5h3.3v3.5c0 2.3-1.6 3.8-3.3 4.8z" fill="#f5c04a"/></svg></span><span class="ab" style="width:25px;background:#3a8dd6"><svg width="15" height="12" viewBox="0 0 15 12"><ellipse cx="5.3" cy="4.3" rx="5.2" ry="4.2" fill="#fff"/><path d="M1.8 7L1.3 9.3 4 8z" fill="#fff"/><ellipse cx="10" cy="7.8" rx="4.6" ry="3.6" fill="#fff" stroke="#3a8dd6" stroke-width=".8"/><path d="M12.5 10.5l1 1.3-.1-2z" fill="#fff"/></svg></span><span class="ab" style="width:21px;background:#2cb28f"><svg width="11" height="11" viewBox="0 0 11 11"><path d="M8 0.5l2.5 2.5L3.5 10 0.5 10.5 1 7.5z" fill="#fff"/></svg></span><span class="ab" style="width:21px;background:#dd4138;margin-right:0"><svg width="10" height="12" viewBox="0 0 10 12"><rect x="0" y="1.6" width="10" height="1.6" fill="#fff"/><rect x="3.3" y="0.2" width="3.4" height="2" fill="#fff"/><path d="M1 3.6h8l-.5 8.2H1.5z" fill="#fff"/><path d="M3.3 5v5.5M5 5v5.5M6.7 5v5.5" stroke="#e88" stroke-width=".6"/></svg></span></td></tr>
<tr class="odd"><td><span class="cb"></span></td><td><span class=n>10447</span></td><td><span class=n>gjlxh</span></td><td><span style="display:inline-block;position:relative;top:3px;left:0.5px"><svg width="27" height="18" viewBox="0 0 40 27" style="opacity:1;display:block"><g stroke-width="1.6" fill="none"><line x1="3.6" y1="5.9" x2="11.3" y2="13.9" stroke="#a6d286"/><line x1="11.3" y1="13.9" x2="20.3" y2="4.2" stroke="#9cc98a"/><line x1="20.3" y1="4.2" x2="28.7" y2="13.2" stroke="#5a9fb0"/><line x1="28.7" y1="13.2" x2="36.4" y2="5.9" stroke="#3a8cc4"/><line x1="28.7" y1="13.2" x2="20.6" y2="22.6" stroke="#3a8cc4"/></g><circle cx="3.6" cy="5.9" r="3.2" fill="#93cc6e"/><circle cx="11.3" cy="13.9" r="2.8" fill="#7fb98a"/><circle cx="20.3" cy="4.2" r="3.6" fill="#80bb80"/><circle cx="28.7" cy="13.2" r="3.1" fill="#2d7fbf"/><circle cx="36.4" cy="5.9" r="3.2" fill="#2d7fbf"/><circle cx="20.6" cy="22.6" r="3.4" fill="#2d7fbf"/></svg></span></td><td>宿迁市公交场站建设发展有限公司</td><td>综合部</td><td>刘晓虎</td><td>-</td><td><span style="color:#2cb28f">是</span></td><td><span style="color:#3a8dd6">否</span></td><td>正常</td><td>-</td><td>无</td><td><span class=n>2022-01-10 17:59:44</span></td><td><span class=n>2022-01-10 17:59:44</span></td><td><span class="ab" style="width:21px;background:#ec9123"><svg width="9" height="11" viewBox="0 0 9 11"><path d="M0 0.5h9v4.5C9 8 6.5 10 4.5 11 2.5 10 0 8 0 5z" fill="#fff"/><path d="M4.5 1.5h3.3v3.5c0 2.3-1.6 3.8-3.3 4.8z" fill="#f5c04a"/></svg></span><span class="ab" style="width:25px;background:#3a8dd6"><svg width="15" height="12" viewBox="0 0 15 12"><ellipse cx="5.3" cy="4.3" rx="5.2" ry="4.2" fill="#fff"/><path d="M1.8 7L1.3 9.3 4 8z" fill="#fff"/><ellipse cx="10" cy="7.8" rx="4.6" ry="3.6" fill="#fff" stroke="#3a8dd6" stroke-width=".8"/><path d="M12.5 10.5l1 1.3-.1-2z" fill="#fff"/></svg></span><span class="ab" style="width:21px;background:#2cb28f"><svg width="11" height="11" viewBox="0 0 11 11"><path d="M8 0.5l2.5 2.5L3.5 10 0.5 10.5 1 7.5z" fill="#fff"/></svg></span><span class="ab" style="width:21px;background:#dd4138;margin-right:0"><svg width="10" height="12" viewBox="0 0 10 12"><rect x="0" y="1.6" width="10" height="1.6" fill="#fff"/><rect x="3.3" y="0.2" width="3.4" height="2" fill="#fff"/><path d="M1 3.6h8l-.5 8.2H1.5z" fill="#fff"/><path d="M3.3 5v5.5M5 5v5.5M6.7 5v5.5" stroke="#e88" stroke-width=".6"/></svg></span></td></tr>
<tr class=""><td><span class="cb"></span></td><td><span class=n>10446</span></td><td><span class=n>gjlxl</span></td><td><span style="display:inline-block;position:relative;top:3px;left:0.5px"><svg width="27" height="18" viewBox="0 0 40 27" style="opacity:1;display:block"><g stroke-width="1.6" fill="none"><line x1="3.6" y1="5.9" x2="11.3" y2="13.9" stroke="#a6d286"/><line x1="11.3" y1="13.9" x2="20.3" y2="4.2" stroke="#9cc98a"/><line x1="20.3" y1="4.2" x2="28.7" y2="13.2" stroke="#5a9fb0"/><line x1="28.7" y1="13.2" x2="36.4" y2="5.9" stroke="#3a8cc4"/><line x1="28.7" y1="13.2" x2="20.6" y2="22.6" stroke="#3a8cc4"/></g><circle cx="3.6" cy="5.9" r="3.2" fill="#93cc6e"/><circle cx="11.3" cy="13.9" r="2.8" fill="#7fb98a"/><circle cx="20.3" cy="4.2" r="3.6" fill="#80bb80"/><circle cx="28.7" cy="13.2" r="3.1" fill="#2d7fbf"/><circle cx="36.4" cy="5.9" r="3.2" fill="#2d7fbf"/><circle cx="20.6" cy="22.6" r="3.4" fill="#2d7fbf"/></svg></span></td><td>宿迁市公交场站建设发展有限公司</td><td>综合部</td><td>刘须珑</td><td>-</td><td><span style="color:#2cb28f">是</span></td><td><span style="color:#3a8dd6">否</span></td><td>正常</td><td>-</td><td>无</td><td><span class=n>2022-01-10 17:59:25</span></td><td><span class=n>2022-01-10 17:59:25</span></td><td><span class="ab" style="width:21px;background:#ec9123"><svg width="9" height="11" viewBox="0 0 9 11"><path d="M0 0.5h9v4.5C9 8 6.5 10 4.5 11 2.5 10 0 8 0 5z" fill="#fff"/><path d="M4.5 1.5h3.3v3.5c0 2.3-1.6 3.8-3.3 4.8z" fill="#f5c04a"/></svg></span><span class="ab" style="width:25px;background:#3a8dd6"><svg width="15" height="12" viewBox="0 0 15 12"><ellipse cx="5.3" cy="4.3" rx="5.2" ry="4.2" fill="#fff"/><path d="M1.8 7L1.3 9.3 4 8z" fill="#fff"/><ellipse cx="10" cy="7.8" rx="4.6" ry="3.6" fill="#fff" stroke="#3a8dd6" stroke-width=".8"/><path d="M12.5 10.5l1 1.3-.1-2z" fill="#fff"/></svg></span><span class="ab" style="width:21px;background:#2cb28f"><svg width="11" height="11" viewBox="0 0 11 11"><path d="M8 0.5l2.5 2.5L3.5 10 0.5 10.5 1 7.5z" fill="#fff"/></svg></span><span class="ab" style="width:21px;background:#dd4138;margin-right:0"><svg width="10" height="12" viewBox="0 0 10 12"><rect x="0" y="1.6" width="10" height="1.6" fill="#fff"/><rect x="3.3" y="0.2" width="3.4" height="2" fill="#fff"/><path d="M1 3.6h8l-.5 8.2H1.5z" fill="#fff"/><path d="M3.3 5v5.5M5 5v5.5M6.7 5v5.5" stroke="#e88" stroke-width=".6"/></svg></span></td></tr>
<tr class="odd"><td><span class="cb"></span></td><td><span class=n>10445</span></td><td><span class=n>gjzyl</span></td><td><span style="display:inline-block;position:relative;top:3px;left:0.5px"><svg width="27" height="18" viewBox="0 0 40 27" style="opacity:1;display:block"><g stroke-width="1.6" fill="none"><line x1="3.6" y1="5.9" x2="11.3" y2="13.9" stroke="#a6d286"/><line x1="11.3" y1="13.9" x2="20.3" y2="4.2" stroke="#9cc98a"/><line x1="20.3" y1="4.2" x2="28.7" y2="13.2" stroke="#5a9fb0"/><line x1="28.7" y1="13.2" x2="36.4" y2="5.9" stroke="#3a8cc4"/><line x1="28.7" y1="13.2" x2="20.6" y2="22.6" stroke="#3a8cc4"/></g><circle cx="3.6" cy="5.9" r="3.2" fill="#93cc6e"/><circle cx="11.3" cy="13.9" r="2.8" fill="#7fb98a"/><circle cx="20.3" cy="4.2" r="3.6" fill="#80bb80"/><circle cx="28.7" cy="13.2" r="3.1" fill="#2d7fbf"/><circle cx="36.4" cy="5.9" r="3.2" fill="#2d7fbf"/><circle cx="20.6" cy="22.6" r="3.4" fill="#2d7fbf"/></svg></span></td><td>宿迁市公交场站建设发展有限公司</td><td>综合部</td><td>周玉林</td><td>-</td><td><span style="color:#2cb28f">是</span></td><td><span style="color:#3a8dd6">否</span></td><td>正常</td><td>-</td><td>无</td><td><span class=n>2022-01-10 17:59:02</span></td><td><span class=n>2022-01-10 17:59:02</span></td><td><span class="ab" style="width:21px;background:#ec9123"><svg width="9" height="11" viewBox="0 0 9 11"><path d="M0 0.5h9v4.5C9 8 6.5 10 4.5 11 2.5 10 0 8 0 5z" fill="#fff"/><path d="M4.5 1.5h3.3v3.5c0 2.3-1.6 3.8-3.3 4.8z" fill="#f5c04a"/></svg></span><span class="ab" style="width:25px;background:#3a8dd6"><svg width="15" height="12" viewBox="0 0 15 12"><ellipse cx="5.3" cy="4.3" rx="5.2" ry="4.2" fill="#fff"/><path d="M1.8 7L1.3 9.3 4 8z" fill="#fff"/><ellipse cx="10" cy="7.8" rx="4.6" ry="3.6" fill="#fff" stroke="#3a8dd6" stroke-width=".8"/><path d="M12.5 10.5l1 1.3-.1-2z" fill="#fff"/></svg></span><span class="ab" style="width:21px;background:#2cb28f"><svg width="11" height="11" viewBox="0 0 11 11"><path d="M8 0.5l2.5 2.5L3.5 10 0.5 10.5 1 7.5z" fill="#fff"/></svg></span><span class="ab" style="width:21px;background:#dd4138;margin-right:0"><svg width="10" height="12" viewBox="0 0 10 12"><rect x="0" y="1.6" width="10" height="1.6" fill="#fff"/><rect x="3.3" y="0.2" width="3.4" height="2" fill="#fff"/><path d="M1 3.6h8l-.5 8.2H1.5z" fill="#fff"/><path d="M3.3 5v5.5M5 5v5.5M6.7 5v5.5" stroke="#e88" stroke-width=".6"/></svg></span></td></tr>
<tr class=""><td><span class="cb"></span></td><td><span class=n>10444</span></td><td><span class=n>gjzl</span></td><td><span style="display:inline-block;position:relative;top:3px;left:0.5px"><svg width="27" height="18" viewBox="0 0 40 27" style="opacity:1;display:block"><g stroke-width="1.6" fill="none"><line x1="3.6" y1="5.9" x2="11.3" y2="13.9" stroke="#a6d286"/><line x1="11.3" y1="13.9" x2="20.3" y2="4.2" stroke="#9cc98a"/><line x1="20.3" y1="4.2" x2="28.7" y2="13.2" stroke="#5a9fb0"/><line x1="28.7" y1="13.2" x2="36.4" y2="5.9" stroke="#3a8cc4"/><line x1="28.7" y1="13.2" x2="20.6" y2="22.6" stroke="#3a8cc4"/></g><circle cx="3.6" cy="5.9" r="3.2" fill="#93cc6e"/><circle cx="11.3" cy="13.9" r="2.8" fill="#7fb98a"/><circle cx="20.3" cy="4.2" r="3.6" fill="#80bb80"/><circle cx="28.7" cy="13.2" r="3.1" fill="#2d7fbf"/><circle cx="36.4" cy="5.9" r="3.2" fill="#2d7fbf"/><circle cx="20.6" cy="22.6" r="3.4" fill="#2d7fbf"/></svg></span></td><td>宿迁市公交场站建设发展有限公司</td><td>综合部</td><td>赵琳</td><td>-</td><td><span style="color:#2cb28f">是</span></td><td><span style="color:#3a8dd6">否</span></td><td>正常</td><td>-</td><td>无</td><td><span class=n>2022-01-10 17:58:40</span></td><td><span class=n>2022-01-10 17:58:40</span></td><td><span class="ab" style="width:21px;background:#ec9123"><svg width="9" height="11" viewBox="0 0 9 11"><path d="M0 0.5h9v4.5C9 8 6.5 10 4.5 11 2.5 10 0 8 0 5z" fill="#fff"/><path d="M4.5 1.5h3.3v3.5c0 2.3-1.6 3.8-3.3 4.8z" fill="#f5c04a"/></svg></span><span class="ab" style="width:25px;background:#3a8dd6"><svg width="15" height="12" viewBox="0 0 15 12"><ellipse cx="5.3" cy="4.3" rx="5.2" ry="4.2" fill="#fff"/><path d="M1.8 7L1.3 9.3 4 8z" fill="#fff"/><ellipse cx="10" cy="7.8" rx="4.6" ry="3.6" fill="#fff" stroke="#3a8dd6" stroke-width=".8"/><path d="M12.5 10.5l1 1.3-.1-2z" fill="#fff"/></svg></span><span class="ab" style="width:21px;background:#2cb28f"><svg width="11" height="11" viewBox="0 0 11 11"><path d="M8 0.5l2.5 2.5L3.5 10 0.5 10.5 1 7.5z" fill="#fff"/></svg></span><span class="ab" style="width:21px;background:#dd4138;margin-right:0"><svg width="10" height="12" viewBox="0 0 10 12"><rect x="0" y="1.6" width="10" height="1.6" fill="#fff"/><rect x="3.3" y="0.2" width="3.4" height="2" fill="#fff"/><path d="M1 3.6h8l-.5 8.2H1.5z" fill="#fff"/><path d="M3.3 5v5.5M5 5v5.5M6.7 5v5.5" stroke="#e88" stroke-width=".6"/></svg></span></td></tr>
<tr class="odd"><td><span class="cb"></span></td><td><span class=n>10443</span></td><td><span class=n>gjzhj</span></td><td><span style="display:inline-block;position:relative;top:3px;left:0.5px"><svg width="27" height="18" viewBox="0 0 40 27" style="opacity:1;display:block"><g stroke-width="1.6" fill="none"><line x1="3.6" y1="5.9" x2="11.3" y2="13.9" stroke="#a6d286"/><line x1="11.3" y1="13.9" x2="20.3" y2="4.2" stroke="#9cc98a"/><line x1="20.3" y1="4.2" x2="28.7" y2="13.2" stroke="#5a9fb0"/><line x1="28.7" y1="13.2" x2="36.4" y2="5.9" stroke="#3a8cc4"/><line x1="28.7" y1="13.2" x2="20.6" y2="22.6" stroke="#3a8cc4"/></g><circle cx="3.6" cy="5.9" r="3.2" fill="#93cc6e"/><circle cx="11.3" cy="13.9" r="2.8" fill="#7fb98a"/><circle cx="20.3" cy="4.2" r="3.6" fill="#80bb80"/><circle cx="28.7" cy="13.2" r="3.1" fill="#2d7fbf"/><circle cx="36.4" cy="5.9" r="3.2" fill="#2d7fbf"/><circle cx="20.6" cy="22.6" r="3.4" fill="#2d7fbf"/></svg></span></td><td>宿迁市公交场站建设发展有限公司</td><td>综合部</td><td>朱红娟</td><td>-</td><td><span style="color:#2cb28f">是</span></td><td><span style="color:#3a8dd6">否</span></td><td>正常</td><td>-</td><td>无</td><td><span class=n>2022-01-10 17:58:12</span></td><td><span class=n>2022-01-10 17:58:12</span></td><td><span class="ab" style="width:21px;background:#ec9123"><svg width="9" height="11" viewBox="0 0 9 11"><path d="M0 0.5h9v4.5C9 8 6.5 10 4.5 11 2.5 10 0 8 0 5z" fill="#fff"/><path d="M4.5 1.5h3.3v3.5c0 2.3-1.6 3.8-3.3 4.8z" fill="#f5c04a"/></svg></span><span class="ab" style="width:25px;background:#3a8dd6"><svg width="15" height="12" viewBox="0 0 15 12"><ellipse cx="5.3" cy="4.3" rx="5.2" ry="4.2" fill="#fff"/><path d="M1.8 7L1.3 9.3 4 8z" fill="#fff"/><ellipse cx="10" cy="7.8" rx="4.6" ry="3.6" fill="#fff" stroke="#3a8dd6" stroke-width=".8"/><path d="M12.5 10.5l1 1.3-.1-2z" fill="#fff"/></svg></span><span class="ab" style="width:21px;background:#2cb28f"><svg width="11" height="11" viewBox="0 0 11 11"><path d="M8 0.5l2.5 2.5L3.5 10 0.5 10.5 1 7.5z" fill="#fff"/></svg></span><span class="ab" style="width:21px;background:#dd4138;margin-right:0"><svg width="10" height="12" viewBox="0 0 10 12"><rect x="0" y="1.6" width="10" height="1.6" fill="#fff"/><rect x="3.3" y="0.2" width="3.4" height="2" fill="#fff"/><path d="M1 3.6h8l-.5 8.2H1.5z" fill="#fff"/><path d="M3.3 5v5.5M5 5v5.5M6.7 5v5.5" stroke="#e88" stroke-width=".6"/></svg></span></td></tr>
<tr class=""><td><span class="cb"></span></td><td><span class=n>10442</span></td><td><span class=n>gjxyp</span></td><td><span style="display:inline-block;position:relative;top:3px;left:0.5px"><svg width="27" height="18" viewBox="0 0 40 27" style="opacity:1;display:block"><g stroke-width="1.6" fill="none"><line x1="3.6" y1="5.9" x2="11.3" y2="13.9" stroke="#a6d286"/><line x1="11.3" y1="13.9" x2="20.3" y2="4.2" stroke="#9cc98a"/><line x1="20.3" y1="4.2" x2="28.7" y2="13.2" stroke="#5a9fb0"/><line x1="28.7" y1="13.2" x2="36.4" y2="5.9" stroke="#3a8cc4"/><line x1="28.7" y1="13.2" x2="20.6" y2="22.6" stroke="#3a8cc4"/></g><circle cx="3.6" cy="5.9" r="3.2" fill="#93cc6e"/><circle cx="11.3" cy="13.9" r="2.8" fill="#7fb98a"/><circle cx="20.3" cy="4.2" r="3.6" fill="#80bb80"/><circle cx="28.7" cy="13.2" r="3.1" fill="#2d7fbf"/><circle cx="36.4" cy="5.9" r="3.2" fill="#2d7fbf"/><circle cx="20.6" cy="22.6" r="3.4" fill="#2d7fbf"/></svg></span></td><td>宿迁市公交场站建设发展有限公司</td><td>综合部</td><td>徐燕萍</td><td>-</td><td><span style="color:#2cb28f">是</span></td><td><span style="color:#3a8dd6">否</span></td><td>正常</td><td>-</td><td>无</td><td><span class=n>2022-01-10 17:57:45</span></td><td><span class=n>2022-01-10 17:57:45</span></td><td><span class="ab" style="width:21px;background:#ec9123"><svg width="9" height="11" viewBox="0 0 9 11"><path d="M0 0.5h9v4.5C9 8 6.5 10 4.5 11 2.5 10 0 8 0 5z" fill="#fff"/><path d="M4.5 1.5h3.3v3.5c0 2.3-1.6 3.8-3.3 4.8z" fill="#f5c04a"/></svg></span><span class="ab" style="width:25px;background:#3a8dd6"><svg width="15" height="12" viewBox="0 0 15 12"><ellipse cx="5.3" cy="4.3" rx="5.2" ry="4.2" fill="#fff"/><path d="M1.8 7L1.3 9.3 4 8z" fill="#fff"/><ellipse cx="10" cy="7.8" rx="4.6" ry="3.6" fill="#fff" stroke="#3a8dd6" stroke-width=".8"/><path d="M12.5 10.5l1 1.3-.1-2z" fill="#fff"/></svg></span><span class="ab" style="width:21px;background:#2cb28f"><svg width="11" height="11" viewBox="0 0 11 11"><path d="M8 0.5l2.5 2.5L3.5 10 0.5 10.5 1 7.5z" fill="#fff"/></svg></span><span class="ab" style="width:21px;background:#dd4138;margin-right:0"><svg width="10" height="12" viewBox="0 0 10 12"><rect x="0" y="1.6" width="10" height="1.6" fill="#fff"/><rect x="3.3" y="0.2" width="3.4" height="2" fill="#fff"/><path d="M1 3.6h8l-.5 8.2H1.5z" fill="#fff"/><path d="M3.3 5v5.5M5 5v5.5M6.7 5v5.5" stroke="#e88" stroke-width=".6"/></svg></span></td></tr>
<tr class="odd"><td><span class="cb"></span></td><td><span class=n>10441</span></td><td><span class=n>gjsq</span></td><td><span style="display:inline-block;position:relative;top:3px;left:0.5px"><svg width="27" height="18" viewBox="0 0 40 27" style="opacity:1;display:block"><g stroke-width="1.6" fill="none"><line x1="3.6" y1="5.9" x2="11.3" y2="13.9" stroke="#a6d286"/><line x1="11.3" y1="13.9" x2="20.3" y2="4.2" stroke="#9cc98a"/><line x1="20.3" y1="4.2" x2="28.7" y2="13.2" stroke="#5a9fb0"/><line x1="28.7" y1="13.2" x2="36.4" y2="5.9" stroke="#3a8cc4"/><line x1="28.7" y1="13.2" x2="20.6" y2="22.6" stroke="#3a8cc4"/></g><circle cx="3.6" cy="5.9" r="3.2" fill="#93cc6e"/><circle cx="11.3" cy="13.9" r="2.8" fill="#7fb98a"/><circle cx="20.3" cy="4.2" r="3.6" fill="#80bb80"/><circle cx="28.7" cy="13.2" r="3.1" fill="#2d7fbf"/><circle cx="36.4" cy="5.9" r="3.2" fill="#2d7fbf"/><circle cx="20.6" cy="22.6" r="3.4" fill="#2d7fbf"/></svg></span></td><td>宿迁市公交场站建设发展有限公司</td><td>综合部</td><td>史琦</td><td>-</td><td><span style="color:#2cb28f">是</span></td><td><span style="color:#3a8dd6">否</span></td><td>正常</td><td>-</td><td>无</td><td><span class=n>2022-01-10 17:57:22</span></td><td><span class=n>2022-01-10 17:57:22</span></td><td><span class="ab" style="width:21px;background:#ec9123"><svg width="9" height="11" viewBox="0 0 9 11"><path d="M0 0.5h9v4.5C9 8 6.5 10 4.5 11 2.5 10 0 8 0 5z" fill="#fff"/><path d="M4.5 1.5h3.3v3.5c0 2.3-1.6 3.8-3.3 4.8z" fill="#f5c04a"/></svg></span><span class="ab" style="width:25px;background:#3a8dd6"><svg width="15" height="12" viewBox="0 0 15 12"><ellipse cx="5.3" cy="4.3" rx="5.2" ry="4.2" fill="#fff"/><path d="M1.8 7L1.3 9.3 4 8z" fill="#fff"/><ellipse cx="10" cy="7.8" rx="4.6" ry="3.6" fill="#fff" stroke="#3a8dd6" stroke-width=".8"/><path d="M12.5 10.5l1 1.3-.1-2z" fill="#fff"/></svg></span><span class="ab" style="width:21px;background:#2cb28f"><svg width="11" height="11" viewBox="0 0 11 11"><path d="M8 0.5l2.5 2.5L3.5 10 0.5 10.5 1 7.5z" fill="#fff"/></svg></span><span class="ab" style="width:21px;background:#dd4138;margin-right:0"><svg width="10" height="12" viewBox="0 0 10 12"><rect x="0" y="1.6" width="10" height="1.6" fill="#fff"/><rect x="3.3" y="0.2" width="3.4" height="2" fill="#fff"/><path d="M1 3.6h8l-.5 8.2H1.5z" fill="#fff"/><path d="M3.3 5v5.5M5 5v5.5M6.7 5v5.5" stroke="#e88" stroke-width=".6"/></svg></span></td></tr>
<tr class=""><td><span class="cb"></span></td><td><span class=n>10440</span></td><td><span class=n>gjwh</span></td><td><span style="display:inline-block;position:relative;top:3px;left:0.5px"><svg width="27" height="18" viewBox="0 0 40 27" style="opacity:1;display:block"><g stroke-width="1.6" fill="none"><line x1="3.6" y1="5.9" x2="11.3" y2="13.9" stroke="#a6d286"/><line x1="11.3" y1="13.9" x2="20.3" y2="4.2" stroke="#9cc98a"/><line x1="20.3" y1="4.2" x2="28.7" y2="13.2" stroke="#5a9fb0"/><line x1="28.7" y1="13.2" x2="36.4" y2="5.9" stroke="#3a8cc4"/><line x1="28.7" y1="13.2" x2="20.6" y2="22.6" stroke="#3a8cc4"/></g><circle cx="3.6" cy="5.9" r="3.2" fill="#93cc6e"/><circle cx="11.3" cy="13.9" r="2.8" fill="#7fb98a"/><circle cx="20.3" cy="4.2" r="3.6" fill="#80bb80"/><circle cx="28.7" cy="13.2" r="3.1" fill="#2d7fbf"/><circle cx="36.4" cy="5.9" r="3.2" fill="#2d7fbf"/><circle cx="20.6" cy="22.6" r="3.4" fill="#2d7fbf"/></svg></span></td><td>宿迁市公交场站建设发展有限公司</td><td>综合部</td><td>王红</td><td>-</td><td><span style="color:#2cb28f">是</span></td><td><span style="color:#3a8dd6">否</span></td><td>正常</td><td>-</td><td>无</td><td><span class=n>2022-01-10 17:56:58</span></td><td><span class=n>2022-01-10 17:56:58</span></td><td><span class="ab" style="width:21px;background:#ec9123"><svg width="9" height="11" viewBox="0 0 9 11"><path d="M0 0.5h9v4.5C9 8 6.5 10 4.5 11 2.5 10 0 8 0 5z" fill="#fff"/><path d="M4.5 1.5h3.3v3.5c0 2.3-1.6 3.8-3.3 4.8z" fill="#f5c04a"/></svg></span><span class="ab" style="width:25px;background:#3a8dd6"><svg width="15" height="12" viewBox="0 0 15 12"><ellipse cx="5.3" cy="4.3" rx="5.2" ry="4.2" fill="#fff"/><path d="M1.8 7L1.3 9.3 4 8z" fill="#fff"/><ellipse cx="10" cy="7.8" rx="4.6" ry="3.6" fill="#fff" stroke="#3a8dd6" stroke-width=".8"/><path d="M12.5 10.5l1 1.3-.1-2z" fill="#fff"/></svg></span><span class="ab" style="width:21px;background:#2cb28f"><svg width="11" height="11" viewBox="0 0 11 11"><path d="M8 0.5l2.5 2.5L3.5 10 0.5 10.5 1 7.5z" fill="#fff"/></svg></span><span class="ab" style="width:21px;background:#dd4138;margin-right:0"><svg width="10" height="12" viewBox="0 0 10 12"><rect x="0" y="1.6" width="10" height="1.6" fill="#fff"/><rect x="3.3" y="0.2" width="3.4" height="2" fill="#fff"/><path d="M1 3.6h8l-.5 8.2H1.5z" fill="#fff"/><path d="M3.3 5v5.5M5 5v5.5M6.7 5v5.5" stroke="#e88" stroke-width=".6"/></svg></span></td></tr>
</table>
<div class="abs" style="left:1901px;top:47px;width:9px;height:886px;background:#f1f1f1"></div>
<div class="abs" style="left:1903px;top:64px;width:7px;height:167px;background:#c1c1c1"></div>
<svg class="abs" style="left:1906px;top:53px" width="6" height="5" viewBox="0 0 6 5"><path d="M3 0L6 5H0z" fill="#a3a3a3"/></svg>
<div class="abs" style="left:0;top:925px;width:636px;height:10px;background:#f1f1f1;border-top:1px solid rgba(0,0,0,.25);border-right:1px solid rgba(0,0,0,.15);border-radius:0 4px 0 0;box-shadow:inset 0 1px 0 #fff"></div>
<div class="t" style="left:3px;top:930px;color:#333;font-size:12px">aa d 2020 .d mnall admin tod bte .dc admin index .com/ref=addtabs&amp;_t=2012</div>
</body></html>
